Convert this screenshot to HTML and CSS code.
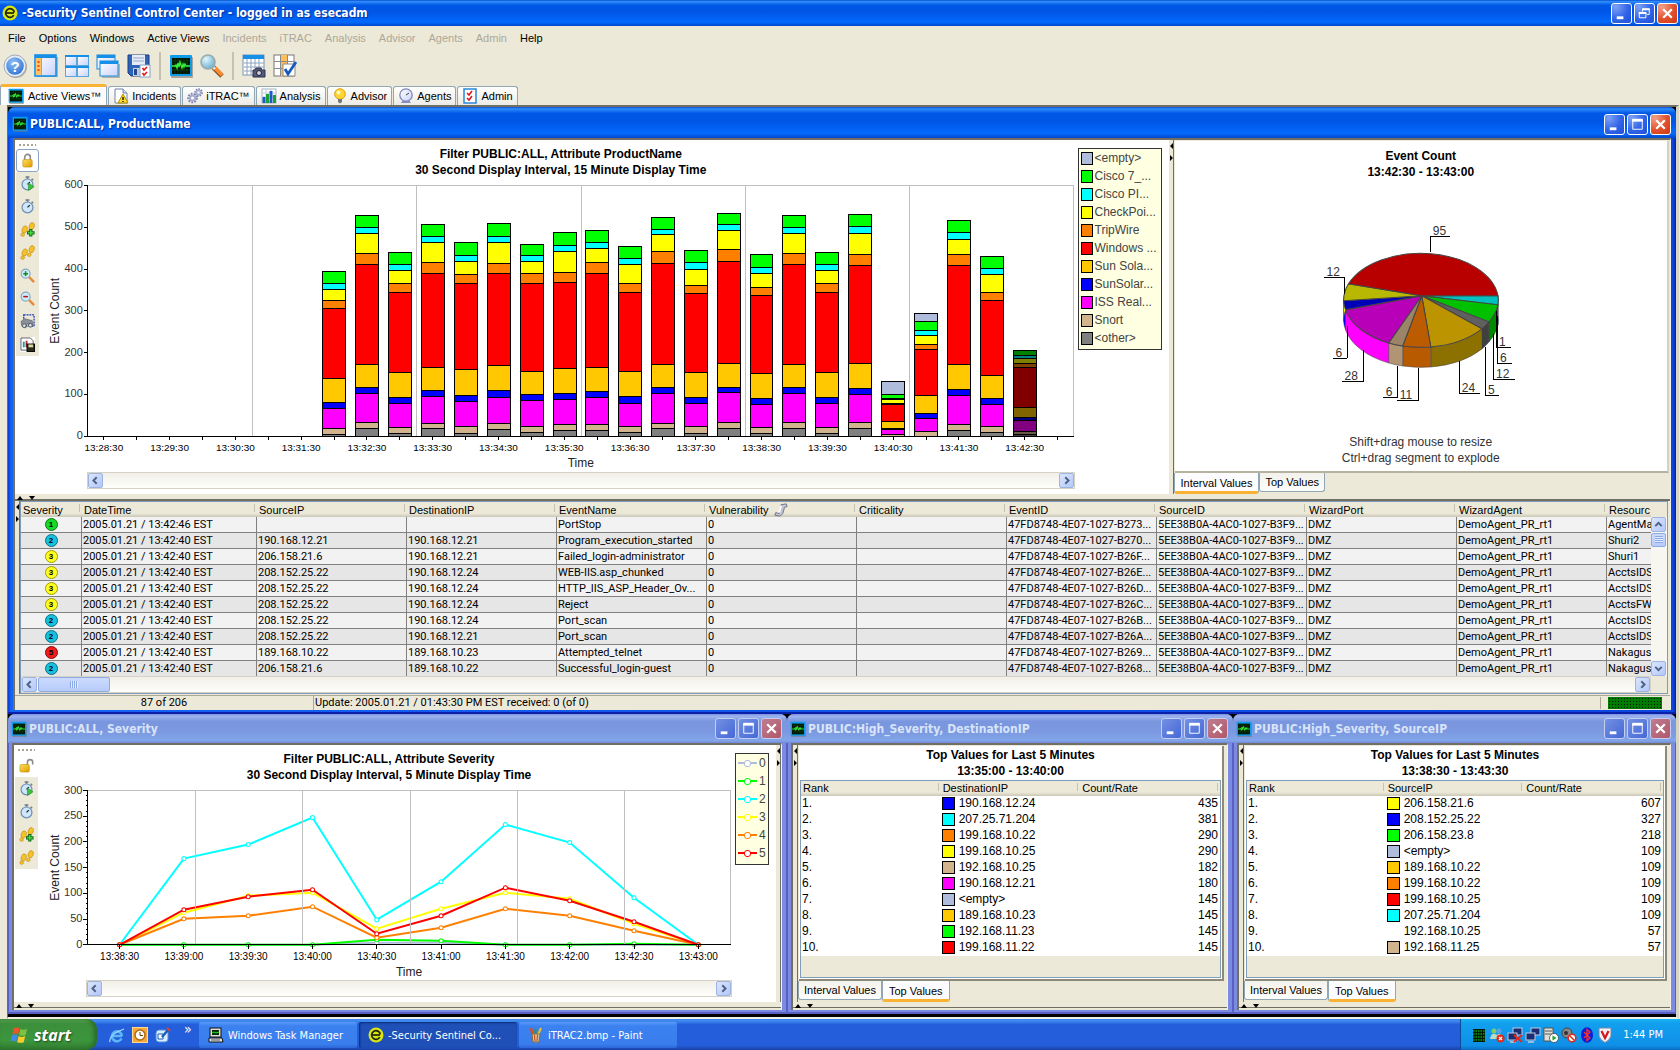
FILE: index.html
```html
<!DOCTYPE html>
<html lang="en">

<head>
    <meta charset="UTF-8">
    <meta name="viewport" content="width=device-width, initial-scale=1.0">
    <title>-Security Sentinel Control Center</title>
    <link rel="stylesheet" href="styles.css">
</head>

<body>
    <!-- icon sprite -->
    <svg class="sprite" xmlns="http://www.w3.org/2000/svg">
        <defs>
            <linearGradient id="g-sky" x1="0" y1="0" x2="1" y2="1"><stop offset="0" stop-color="#fff" /><stop offset="1" stop-color="#c9d3fb" /></linearGradient>
            <radialGradient id="g-help" cx=".4" cy=".3" r=".8"><stop offset="0" stop-color="#8fc0f8" /><stop offset="1" stop-color="#2a6fd0" /></radialGradient>
            <radialGradient id="g-lens" cx=".35" cy=".3" r=".8"><stop offset="0" stop-color="#e4f6fc" /><stop offset="1" stop-color="#5fa9cc" /></radialGradient>
            <linearGradient id="g-gold" x1="0" y1="0" x2="1" y2="1"><stop offset="0" stop-color="#ffe25a" /><stop offset="1" stop-color="#e09a00" /></linearGradient>

            <symbol id="i-logo" viewBox="0 0 16 16"><circle cx="8" cy="8" r="7.5" fill="#d9e414" /><circle cx="8" cy="8" r="4.300" fill="none" stroke="#20240a" stroke-width="1.800" stroke-dasharray="23.500 3.500" transform="rotate(30 8 8)" /><path d="M4 8h8" stroke="#20240a" stroke-width="1.700" /></symbol>
            <symbol id="i-pulse" viewBox="0 0 24 24"><rect x="2" y="3" width="22" height="21" rx="1" fill="#777" opacity=".6" /><rect x="1" y="1" width="22" height="21" rx="1" fill="#0e9bea" /><rect x="3" y="4" width="18" height="16" fill="#021003" /><path d="M6 4v16M9 4v16M12 4v16M15 4v16M18 4v16M3 7h18M3 10h18M3 13h18M3 16h18" stroke="#0c4a10" stroke-width=".7" /><path d="M3 12h3l1-1 1 3 1-5 1 4 1-5 2 6 1-4 1 3 1-3 1 2h4" fill="none" stroke="#39f23c" stroke-width="1.3" /></symbol>
            <symbol id="i-help" viewBox="0 0 24 24"><circle cx="13" cy="13" r="11" fill="#888" opacity=".6" /><circle cx="12" cy="12" r="11" fill="#e9eef4" stroke="#8d98a8" stroke-width=".8" /><circle cx="12" cy="12" r="8.8" fill="url(#g-help)" /><text x="12" y="17.5" text-anchor="middle" font-size="15" font-weight="bold" font-family="Liberation Sans, sans-serif" fill="#fff">?</text></symbol>
            <symbol id="i-layout" viewBox="0 0 24 24"><rect x="2" y="3" width="22" height="20" fill="#8a8a8a" opacity=".6" /><rect x="1" y="1" width="21" height="21" fill="url(#g-sky)" stroke="#1590e6" stroke-width="1.6" /><rect x="1" y="1" width="21" height="3" fill="#1590e6" /><rect x="2" y="4" width="5" height="17" fill="#ffc266" /><path d="M7.500 4v17" stroke="#6ab4ee" /><path d="M4.500 7v2M4.500 11v2M4.500 15v2" stroke="#e2521a" stroke-width="2" /></symbol>
            <symbol id="i-tile" viewBox="0 0 24 24"><g fill="url(#g-sky)" stroke="#5aa6dc"><rect x=".5" y="1.500" width="11" height="10" /><rect x="12.500" y="1.500" width="11" height="10" /><rect x=".5" y="12.500" width="11" height="10" /><rect x="12.500" y="12.500" width="11" height="10" /></g><path d="M0 2h24M0 13h24" stroke="#1590e6" stroke-width="2" /></symbol>
            <symbol id="i-cascade" viewBox="0 0 24 24"><rect x="6" y="10" width="18" height="14" fill="#8a8a8a" opacity=".6" /><g fill="url(#g-sky)" stroke="#3a9ae0" stroke-width="1.200"><rect x="1" y="1" width="18" height="14" /><rect x="4" y="7" width="18" height="15" /></g><path d="M1 2.500h18M4 8.500h18" stroke="#1590e6" stroke-width="3" /></symbol>
            <symbol id="i-save" viewBox="0 0 24 24"><path d="M1 1h21v21H4l-3-3z" fill="#2f63b8" stroke="#163f86" /><rect x="5" y="1" width="13" height="10" fill="#e6ecf6" /><path d="M6 4h11M6 7h11" stroke="#8fa5cc" /><rect x="6" y="14" width="8" height="8" fill="#c5cfe0" /><rect x="7" y="15" width="3" height="6" fill="#234a90" /><rect x="13" y="11" width="10" height="12" fill="#fff" stroke="#8aa0c0" /><path d="M15.500 14l1.500 2 3-3M15.500 19l1.500 2 3-3" stroke="#e01010" fill="none" stroke-width="1.500" /></symbol>
            <symbol id="i-find" viewBox="0 0 24 24"><path d="M13 13l9 9" stroke="#8a5a30" stroke-width="5" /><path d="M15 14l7 7" stroke="#ff8a2a" stroke-width="3.500" /><path d="M12 12l3 3" stroke="#ddd" stroke-width="3" /><circle cx="8" cy="8" r="7" fill="url(#g-lens)" stroke="#9aa" stroke-width="1.600" /></symbol>
            <symbol id="i-gridcam" viewBox="0 0 24 24"><rect x="1" y="1" width="21" height="20" fill="#fff" stroke="#7794b8" /><path d="M5 5v16M9 5v16M13 5v16M17 5v16M2 9h20M2 13h20M2 17h20" stroke="#8fa2bb" /><rect x="1" y="1" width="21" height="4" fill="#1590e6" /><path d="M11 16h2l1-2h5l1 2h3v7H11z" fill="#55597a" stroke="#2d3050" /><circle cx="17" cy="19" r="2.500" fill="#c8cee8" stroke="#222" /></symbol>
            <symbol id="i-gridcheck" viewBox="0 0 24 24"><rect x="1" y="1" width="20" height="21" fill="#fff" stroke="#777" /><rect x="7" y="1" width="7" height="21" fill="#ffbe5c" /><path d="M7.500 1v21M14.500 1v21M1 7.500h20M1 14.500h20" stroke="#8a8a8a" /><path d="M10 10h12v12H10z" fill="#fff" stroke="#8a8a8a" /><path d="M12 15l3 5 8-12" stroke="#1458c0" stroke-width="2.800" fill="none" /></symbol>
            <symbol id="i-docwarn" viewBox="0 0 16 16"><path d="M2 1h8l4 4v10H2z" fill="#fff" stroke="#6e83a8" /><path d="M10 1v4h4" fill="#d5def0" stroke="#6e83a8" /><path d="M10 6l5 9H5z" fill="#ffe02a" stroke="#b08a00" /><path d="M10 9v3M10 13v1" stroke="#000" stroke-width="1.300" /></symbol>
            <symbol id="i-gears" viewBox="0 0 16 16"><g fill="none" stroke="#7d83ae"><circle cx="5.500" cy="10" r="4.300" stroke-dasharray="1.800 1.200" stroke-width="2" /><circle cx="11.500" cy="4.500" r="3.300" stroke-dasharray="1.500 1" stroke-width="2" /></g><circle cx="5.500" cy="10" r="3.600" fill="#a6acd0" /><circle cx="11.500" cy="4.500" r="2.800" fill="#a6acd0" /><circle cx="5.500" cy="10" r="1.500" fill="#fff" /><circle cx="11.500" cy="4.500" r="1.200" fill="#fff" /></symbol>
            <symbol id="i-bars" viewBox="0 0 16 16"><rect x="1" y="1" width="14" height="14" fill="#fff" stroke="#aab4c4" /><path d="M1 5h14M1 9h14M5 1v14M10 1v14" stroke="#c5ccd8" /><path d="M3 15V9" stroke="#1c58c8" stroke-width="3" /><path d="M6.500 15V6" stroke="#18a030" stroke-width="3" /><path d="M10 15V3" stroke="#1c58c8" stroke-width="3" /><path d="M13.500 15V7" stroke="#18a030" stroke-width="3" /></symbol>
            <symbol id="i-bulb" viewBox="0 0 16 16"><circle cx="8" cy="6" r="5.300" fill="#ffd633" stroke="#e0a000" /><circle cx="6.500" cy="4.500" r="2" fill="#fff6c0" /><path d="M6 11h4v3l-2 1.500L6 14z" fill="#777" /></symbol>
            <symbol id="i-dial" viewBox="0 0 16 16"><path d="M3 15h10l-2-3H5z" fill="#8a8ec0" /><circle cx="8" cy="7" r="6.200" fill="url(#g-sky)" stroke="#8088b8" stroke-width="1.300" /><path d="M8 7l3-2" stroke="#444" /></symbol>
            <symbol id="i-check" viewBox="0 0 16 16"><rect x="2" y="1" width="12" height="14" fill="#fff" stroke="#2a86d8" stroke-width="1.500" /><path d="M5 5l2 2 3-4M5 10l2 2 3-4" stroke="#e01818" fill="none" stroke-width="1.600" /></symbol>
            <symbol id="i-lock" viewBox="0 0 16 16"><path d="M5 8V4.500a3 3 0 0 1 6 0V8" fill="none" stroke="#8c8c8c" stroke-width="1.700" /><rect x="3" y="7" width="10" height="8" rx="1.500" fill="url(#g-gold)" stroke="#b88a00" stroke-width=".6" /></symbol>
            <symbol id="i-unlock" viewBox="0 0 16 16"><path d="M9 8V4.500a2.800 2.800 0 0 1 5.600 0V7" fill="none" stroke="#8c8c8c" stroke-width="1.700" /><rect x="1" y="7" width="10" height="8" rx="1.500" fill="url(#g-gold)" stroke="#b88a00" stroke-width=".6" /></symbol>
            <symbol id="i-watch" viewBox="0 0 16 16"><path d="M6 1h4M8 1v3M12.500 3l1.500 1.500" stroke="#707a88" stroke-width="1.600" /><circle cx="8" cy="9" r="5.800" fill="#cfe6fb" stroke="#6f8fb2" stroke-width="1.300" /><path d="M8 9l2.500-2.500" stroke="#123" stroke-width="1.300" /></symbol>
            <symbol id="i-watchplay" viewBox="0 0 16 16"><use href="#i-watch" /><path d="M9 7.500l6 4-6 4z" fill="#3cc23c" stroke="#1c8a24" stroke-width=".6" /></symbol>
            <symbol id="i-feet" viewBox="0 0 16 16"><g fill="#f7c229" stroke="#b07c00" stroke-width=".5"><ellipse cx="5" cy="8" rx="2.700" ry="4" transform="rotate(20 5 8)" /><ellipse cx="2.800" cy="13.500" rx="2" ry="1.800" /><ellipse cx="12.500" cy="4.500" rx="2.700" ry="4" transform="rotate(20 12.500 4.500)" /><ellipse cx="9.900" cy="10.500" rx="2" ry="1.800" /></g></symbol>
            <symbol id="i-feetplus" viewBox="0 0 16 16"><use href="#i-feet" /><path d="M11.500 7.500v8M7.500 11.500h8" stroke="#0a6a14" stroke-width="3.400" /><path d="M11.500 8.500v6M8.500 11.500h6" stroke="#4fe04a" stroke-width="1.400" /></symbol>
            <symbol id="i-zoomin" viewBox="0 0 16 16"><path d="M9 9l6 6" stroke="#e88a3a" stroke-width="2.600" /><circle cx="6" cy="6" r="4.800" fill="#cdeaf8" stroke="#8ab" stroke-width="1.200" /><path d="M6 3.500v5M3.500 6h5" stroke="#108a18" stroke-width="1.600" /></symbol>
            <symbol id="i-zoomout" viewBox="0 0 16 16"><path d="M9 9l6 6" stroke="#e88a3a" stroke-width="2.600" /><circle cx="6" cy="6" r="4.800" fill="#cdeaf8" stroke="#8ab" stroke-width="1.200" /><path d="M3.500 6h5" stroke="#c01010" stroke-width="1.600" /></symbol>
            <symbol id="i-binoc" viewBox="0 0 16 16"><rect x="4" y="1" width="11" height="12" fill="none" stroke="#1434b8" stroke-width="1.300" stroke-dasharray="2 1" /><path d="M1 8l4-3 8 2 1 5-3 2-3-4-2 5-4-2z" fill="#8a8f98" stroke="#555" stroke-width=".6" /><circle cx="4.500" cy="12.500" r="2" fill="#cfe0ee" stroke="#555" /><circle cx="11" cy="12" r="2" fill="#cfe0ee" stroke="#555" /></symbol>
            <symbol id="i-chartsave" viewBox="0 0 16 16"><rect width="16" height="16" fill="#fff" /><path d="M1 1h10l3 3v10H1z" fill="#fff" stroke="#555" /><path d="M4 11V5" stroke="#18a0a0" stroke-width="2" /><path d="M7 11V4" stroke="#d02020" stroke-width="2" /><rect x="7.500" y="7.500" width="8" height="8" fill="#2c2c1c" stroke="#000" /><rect x="9" y="8" width="5" height="3" fill="#d8d8a0" /></symbol>
            <symbol id="i-scroll" viewBox="0 0 16 16"><path d="M8 2l6-1 1 3-3 1-2 7-3 3-6-1 1-3 4 1z" fill="#c4c6d6" stroke="#666a80" /><path d="M8 3l-2 8" stroke="#fff" stroke-width="2" /></symbol>
            <symbol id="i-min" viewBox="0 0 20 20"><path d="M5 14.500h7" stroke="#fff" stroke-width="3" /></symbol>
            <symbol id="i-max" viewBox="0 0 20 20"><path d="M5 5h10v10H5z" fill="none" stroke="#fff" /><path d="M4.500 5.500h11" stroke="#fff" stroke-width="3" /></symbol>
            <symbol id="i-restore" viewBox="0 0 20 20"><path d="M8 8V5.500h7V11h-2.500M4.500 9.500h7v5h-7z" fill="none" stroke="#fff" /><path d="M7.500 5.500h8M4 9.500h8" stroke="#fff" stroke-width="2" /></symbol>
            <symbol id="i-close" viewBox="0 0 20 20"><path d="M5.500 5.500l9 9M14.500 5.500l-9 9" stroke="#fff" stroke-width="2.300" /></symbol>
            <symbol id="i-left" viewBox="0 0 16 16"><path d="M9.500 4L5.500 8l4 4" fill="none" stroke="#4d6185" stroke-width="2.400" /></symbol>
            <symbol id="i-right" viewBox="0 0 16 16"><path d="M6.500 4l4 4-4 4" fill="none" stroke="#4d6185" stroke-width="2.400" /></symbol>
            <symbol id="i-up" viewBox="0 0 16 16"><path d="M4 10l4-4 4 4" fill="none" stroke="#4d6185" stroke-width="2.400" /></symbol>
            <symbol id="i-down" viewBox="0 0 16 16"><path d="M4 6l4 4 4-4" fill="none" stroke="#4d6185" stroke-width="2.400" /></symbol>
            <symbol id="i-arrows-v" viewBox="0 0 4 18"><path d="M4 0v6L1 3zM1 12v6l3-3z" fill="#000" /></symbol>
            <symbol id="i-arrows-h" viewBox="0 0 18 4"><path d="M0 4h6L3 0zM12 0h6l-3 4z" fill="#000" /></symbol>
            <symbol id="i-flag" viewBox="0 0 20 18"><path d="M4 2q3-2 6 0l-1.500 6.500q-3-2-6 0z" fill="#f0532a" /><path d="M11 2.500q3 2 7 0l-1.500 6.500q-3 1.500-7 0z" fill="#7cc142" /><path d="M2 9.500q3-2 6 0L6.500 16q-3-2-6 0z" fill="#3f8bea" /><path d="M9 10q3 2 7 0l-1.500 6.500q-3 1.500-7 0z" fill="#fbcb2e" /></symbol>
            <symbol id="i-ie" viewBox="0 0 16 16"><path d="M13 9H4M12.500 11.500A5 5 0 1 1 13 9" fill="none" stroke="#5cb6f5" stroke-width="2.600" /><path d="M1 15Q-1 8 15 2" fill="none" stroke="#a5dcff" stroke-width="1.300" /></symbol>
            <symbol id="i-outlook" viewBox="0 0 16 16"><rect x=".5" y=".5" width="15" height="15" fill="#f2a83a" stroke="#ffd890" /><circle cx="8" cy="8" r="5" fill="#fff" stroke="#b06a10" stroke-width="1.500" /><path d="M8 5v3.500h3" fill="none" stroke="#704000" /></symbol>
            <symbol id="i-desk" viewBox="0 0 16 16"><rect x="1" y="3" width="12" height="12" rx="3" fill="#d8ecff" stroke="#4a90d8" /><path d="M3 7h5v5H3z" fill="#fff" stroke="#1c5cb8" /><path d="M7 10l6-7" stroke="#1c5cb8" stroke-width="2.500" /><path d="M12 1l3 3" stroke="#e84020" stroke-width="2" /></symbol>
            <symbol id="i-pc" viewBox="0 0 16 16"><rect x="2" y="1" width="11" height="9" fill="#ddd" stroke="#111" /><rect x="4" y="3" width="7" height="5" fill="#052a08" /><path d="M4 6l2-1 2 1 3-1" stroke="#2be22b" fill="none" /><path d="M1 11h13l1 4H1z" fill="#e8e8e8" stroke="#111" /><path d="M3 13h9" stroke="#555" /></symbol>
            <symbol id="i-paint" viewBox="0 0 16 16"><path d="M4.500 8L3 1" stroke="#e04a20" stroke-width="2.400" /><path d="M7.500 8V2" stroke="#2ca02c" stroke-width="1.800" /><path d="M10 8l3-7" stroke="#f0c020" stroke-width="2" /><path d="M4 7h8l-1 8H5z" fill="#d8c49a" stroke="#8a6a30" /><path d="M6.500 8l.5 6M9.500 8L9 14" stroke="#c83a18" /></symbol>
            <symbol id="i-people" viewBox="0 0 16 16"><circle cx="5" cy="4" r="2.500" fill="#7ccf6a" /><circle cx="10" cy="4" r="2.500" fill="#5aa0e8" /><path d="M1 12q1-6 5-5t3 5zM7 12q1-6 4-5t3 5z" fill="#b8dcc8" /><circle cx="11.500" cy="11.500" r="4" fill="#e02a1a" /><path d="M10 10l3 3M13 10l-3 3" stroke="#fff" stroke-width="1.200" /></symbol>
            <symbol id="i-net" viewBox="0 0 16 16"><rect x="6" y="1" width="9" height="7" fill="#1c2c70" stroke="#c0c8e0" /><rect x="1" y="6" width="9" height="7" fill="#1c2c70" stroke="#c0c8e0" /><path d="M3 15h6" stroke="#c0c8e0" stroke-width="1.500" /></symbol>
            <symbol id="i-netoff" viewBox="0 0 16 16"><use href="#i-net" /><path d="M7 8l8 7M15 8l-8 7" stroke="#e8281c" stroke-width="2" /></symbol>
            <symbol id="i-server" viewBox="0 0 16 16"><rect x="1" y="1" width="9" height="13" fill="#e0e0d8" stroke="#555" /><path d="M2 4h7M2 7h7" stroke="#555" /><circle cx="11" cy="11" r="4.500" fill="#fff" stroke="#333" stroke-width=".7" /><path d="M9.500 8.500l4 2.500-4 2.500z" fill="#18a028" /></symbol>
            <symbol id="i-sound" viewBox="0 0 16 16"><circle cx="6" cy="6" r="5" fill="#888" stroke="#444" /><circle cx="5" cy="6" r="2" fill="#333" /><circle cx="11" cy="11" r="3.800" fill="#fff" stroke="#e02a1a" stroke-width="1.500" /><path d="M8.500 8.500l5 5" stroke="#e02a1a" stroke-width="1.500" /></symbol>
            <symbol id="i-bt" viewBox="0 0 16 16"><ellipse cx="8" cy="8" rx="6" ry="7.800" fill="#0a1ce0" /><path d="M5 5l6 6-3 2.500v-11L11 5l-6 6" fill="none" stroke="#ff3020" stroke-width="1.300" /></symbol>
            <symbol id="i-shield" viewBox="0 0 16 16"><path d="M2 1h12v8q-1 4-6 6.500Q3 13 2 9z" fill="#f2f2f4" stroke="#7a86a8" /><path d="M4.500 4L8 11l3.500-7" fill="none" stroke="#d01818" stroke-width="2.200" /></symbol>
            <symbol id="i-load" viewBox="0 0 16 16"><rect x="2" y="2" width="12" height="13" fill="#021a04" /><path d="M2 4h12M2 7h12M2 10h12M2 13h12" stroke="#0c9a14" stroke-width="1.500" stroke-dasharray="1.500 1" /></symbol>
        </defs>
    </svg>

    <header class="app-title">
        <svg class="icon16"><use href="#i-logo" /></svg>
        <h1>-Security Sentinel Control Center - logged in as esecadm</h1>
        <div class="win-buttons">
            <button class="win-btn" aria-label="Minimize"><svg><use href="#i-min" /></svg></button>
            <button class="win-btn" aria-label="Restore"><svg><use href="#i-restore" /></svg></button>
            <button class="win-btn close" aria-label="Close"><svg><use href="#i-close" /></svg></button>
        </div>
    </header>

    <nav class="menu">
        <button>File</button>
        <button>Options</button>
        <button>Windows</button>
        <button>Active Views</button>
        <button disabled>Incidents</button>
        <button disabled>iTRAC</button>
        <button disabled>Analysis</button>
        <button disabled>Advisor</button>
        <button disabled>Agents</button>
        <button disabled>Admin</button>
        <button>Help</button>
    </nav>

    <div class="toolbar">
        <button aria-label="Help"><svg><use href="#i-help" /></svg></button>
        <button aria-label="Navigator"><svg><use href="#i-layout" /></svg></button>
        <button aria-label="Tile"><svg><use href="#i-tile" /></svg></button>
        <button aria-label="Cascade"><svg><use href="#i-cascade" /></svg></button>
        <button aria-label="Save preferences"><svg><use href="#i-save" /></svg></button>
        <span class="sep"></span>
        <button aria-label="New active view"><svg><use href="#i-pulse" /></svg></button>
        <button aria-label="Find"><svg><use href="#i-find" /></svg></button>
        <span class="sep"></span>
        <button aria-label="Snapshot"><svg><use href="#i-gridcam" /></svg></button>
        <button aria-label="Manage columns"><svg><use href="#i-gridcheck" /></svg></button>
    </div>

    <div class="tabs" role="tablist">
        <button class="tab active" role="tab"><svg class="icon16"><use href="#i-pulse" /></svg>Active Views™</button>
        <button class="tab" role="tab"><svg class="icon16"><use href="#i-docwarn" /></svg>Incidents</button>
        <button class="tab" role="tab"><svg class="icon16"><use href="#i-gears" /></svg>iTRAC™</button>
        <button class="tab" role="tab"><svg class="icon16"><use href="#i-bars" /></svg>Analysis</button>
        <button class="tab" role="tab"><svg class="icon16"><use href="#i-bulb" /></svg>Advisor</button>
        <button class="tab" role="tab"><svg class="icon16"><use href="#i-dial" /></svg>Agents</button>
        <button class="tab" role="tab"><svg class="icon16"><use href="#i-check" /></svg>Admin</button>
    </div>

    <main class="desktop">
        <!-- product name window -->
        <section class="window">
            <div class="window-title">
                <svg class="icon16"><use href="#i-pulse" /></svg>
                <h2>PUBLIC:ALL, ProductName</h2>
                <div class="win-buttons">
                    <button class="win-btn" aria-label="Minimize"><svg><use href="#i-min" /></svg></button>
                    <button class="win-btn" aria-label="Maximize"><svg><use href="#i-max" /></svg></button>
                    <button class="win-btn close" aria-label="Close"><svg><use href="#i-close" /></svg></button>
                </div>
            </div>
            <div class="window-body">
                <div class="chart-row">
                    <div class="chart-area">
                        <div class="side-tools">
                            <span class="grip"></span>
                            <button class="pressed" aria-label="Lock"><svg><use href="#i-lock" /></svg></button>
                            <button aria-label="Start refresh"><svg><use href="#i-watchplay" /></svg></button>
                            <button aria-label="Refresh rate"><svg><use href="#i-watch" /></svg></button>
                            <button aria-label="Increase display time"><svg><use href="#i-feetplus" /></svg></button>
                            <button aria-label="Decrease display time"><svg><use href="#i-feet" /></svg></button>
                            <button aria-label="Zoom in"><svg><use href="#i-zoomin" /></svg></button>
                            <button aria-label="Zoom out"><svg><use href="#i-zoomout" /></svg></button>
                            <button aria-label="Zoom to selection"><svg><use href="#i-binoc" /></svg></button>
                            <button aria-label="Save chart"><svg><use href="#i-chartsave" /></svg></button>
                        </div>
                        <div class="chart">
                            <h3>Filter PUBLIC:ALL, Attribute ProductName<br>30 Second Display Interval, 15 Minute Display Time</h3>
                            <svg id="product-chart" class="plot" viewBox="0 0 1036 292"></svg>
                            <div class="hscroll">
                                <button aria-label="Scroll left"><svg><use href="#i-left" /></svg></button>
                                <button aria-label="Scroll right"><svg><use href="#i-right" /></svg></button>
                            </div>
                        </div>
                        <ul class="legend wide">
                            <li><span class="swatch empty"></span>&lt;empty&gt;</li>
                            <li><span class="swatch green"></span>Cisco 7_...</li>
                            <li><span class="swatch cyan"></span>Cisco PI...</li>
                            <li><span class="swatch yellow"></span>CheckPoi...</li>
                            <li><span class="swatch orange"></span>TripWire</li>
                            <li><span class="swatch red"></span>Windows ...</li>
                            <li><span class="swatch gold"></span>Sun Sola...</li>
                            <li><span class="swatch blue"></span>SunSolar...</li>
                            <li><span class="swatch magenta"></span>ISS Real...</li>
                            <li><span class="swatch tan"></span>Snort</li>
                            <li><span class="swatch gray"></span>&lt;other&gt;</li>
                        </ul>
                    </div>
                    <div class="vsplit"><svg><use href="#i-arrows-v" /></svg></div>
                    <div class="pie-side">
                        <div class="pie-panel">
                            <h3>Event Count<br>13:42:30 - 13:43:00</h3>
                            <svg id="pie-chart" class="plot" viewBox="0 3 491 250"></svg>
                            <p class="hint">Shift+drag mouse to resize<br>Ctrl+drag segment to explode</p>
                        </div>
                        <div class="bottom-tabs" role="tablist">
                            <button class="btab active" role="tab">Interval Values</button>
                            <button class="btab" role="tab">Top Values</button>
                        </div>
                    </div>
                </div>
                <div class="hsplit"><svg><use href="#i-arrows-h" /></svg></div>
                <div class="event-row">
                    <div class="vsplit"><svg><use href="#i-arrows-v" /></svg></div>
                    <div class="event-panel">
                        <div class="event-scroll">
                            <table class="events">
                                <colgroup><col class="c-sev"><col class="c-date"><col span="9"><col class="c-last"></colgroup>
                                <thead>
                                    <tr><th>Severity</th><th>DateTime</th><th>SourceIP</th><th>DestinationIP</th><th>EventName</th><th>Vulnerability <svg class="sort"><use href="#i-scroll" /></svg></th><th>Criticality</th><th>EventID</th><th>SourceID</th><th>WizardPort</th><th>WizardAgent</th><th>Resourc</th></tr>
                                </thead>
                                <tbody>
                                    <tr><td><span class="sev s1">1</span></td><td>2005.01.21 / 13:42:46 EST</td><td></td><td></td><td>PortStop</td><td>0</td><td></td><td>47FD8748-4E07-1027-B273...</td><td>5EE38B0A-4AC0-1027-B3F9...</td><td>DMZ</td><td>DemoAgent_PR_rt1</td><td>AgentMa</td></tr>
                                    <tr><td><span class="sev s2">2</span></td><td>2005.01.21 / 13:42:40 EST</td><td>190.168.12.21</td><td>190.168.12.21</td><td>Program_execution_started</td><td>0</td><td></td><td>47FD8748-4E07-1027-B270...</td><td>5EE38B0A-4AC0-1027-B3F9...</td><td>DMZ</td><td>DemoAgent_PR_rt1</td><td>Shuri2</td></tr>
                                    <tr><td><span class="sev s3">3</span></td><td>2005.01.21 / 13:42:40 EST</td><td>206.158.21.6</td><td>190.168.12.21</td><td>Failed_login-administrator</td><td>0</td><td></td><td>47FD8748-4E07-1027-B26F...</td><td>5EE38B0A-4AC0-1027-B3F9...</td><td>DMZ</td><td>DemoAgent_PR_rt1</td><td>Shuri1</td></tr>
                                    <tr><td><span class="sev s3">3</span></td><td>2005.01.21 / 13:42:40 EST</td><td>208.152.25.22</td><td>190.168.12.24</td><td>WEB-IIS.asp_chunked</td><td>0</td><td></td><td>47FD8748-4E07-1027-B26E...</td><td>5EE38B0A-4AC0-1027-B3F9...</td><td>DMZ</td><td>DemoAgent_PR_rt1</td><td>AcctsIDS</td></tr>
                                    <tr><td><span class="sev s3">3</span></td><td>2005.01.21 / 13:42:40 EST</td><td>208.152.25.22</td><td>190.168.12.24</td><td>HTTP_IIS_ASP_Header_Ov...</td><td>0</td><td></td><td>47FD8748-4E07-1027-B26D...</td><td>5EE38B0A-4AC0-1027-B3F9...</td><td>DMZ</td><td>DemoAgent_PR_rt1</td><td>AcctsIDS</td></tr>
                                    <tr><td><span class="sev s3">3</span></td><td>2005.01.21 / 13:42:40 EST</td><td>208.152.25.22</td><td>190.168.12.24</td><td>Reject</td><td>0</td><td></td><td>47FD8748-4E07-1027-B26C...</td><td>5EE38B0A-4AC0-1027-B3F9...</td><td>DMZ</td><td>DemoAgent_PR_rt1</td><td>AcctsFW</td></tr>
                                    <tr><td><span class="sev s2">2</span></td><td>2005.01.21 / 13:42:40 EST</td><td>208.152.25.22</td><td>190.168.12.24</td><td>Port_scan</td><td>0</td><td></td><td>47FD8748-4E07-1027-B26B...</td><td>5EE38B0A-4AC0-1027-B3F9...</td><td>DMZ</td><td>DemoAgent_PR_rt1</td><td>AcctsIDS</td></tr>
                                    <tr><td><span class="sev s2">2</span></td><td>2005.01.21 / 13:42:40 EST</td><td>208.152.25.22</td><td>190.168.12.21</td><td>Port_scan</td><td>0</td><td></td><td>47FD8748-4E07-1027-B26A...</td><td>5EE38B0A-4AC0-1027-B3F9...</td><td>DMZ</td><td>DemoAgent_PR_rt1</td><td>AcctsIDS</td></tr>
                                    <tr><td><span class="sev s5">5</span></td><td>2005.01.21 / 13:42:40 EST</td><td>189.168.10.22</td><td>189.168.10.23</td><td>Attempted_telnet</td><td>0</td><td></td><td>47FD8748-4E07-1027-B269...</td><td>5EE38B0A-4AC0-1027-B3F9...</td><td>DMZ</td><td>DemoAgent_PR_rt1</td><td>Nakagus</td></tr>
                                    <tr><td><span class="sev s2">2</span></td><td>2005.01.21 / 13:42:40 EST</td><td>206.158.21.6</td><td>189.168.10.22</td><td>Successful_login-guest</td><td>0</td><td></td><td>47FD8748-4E07-1027-B268...</td><td>5EE38B0A-4AC0-1027-B3F9...</td><td>DMZ</td><td>DemoAgent_PR_rt1</td><td>Nakagus</td></tr>
                                </tbody>
                            </table>
                        </div>
                        <div class="vscroll">
                            <button aria-label="Scroll up"><svg><use href="#i-up" /></svg></button>
                            <span class="thumb"></span>
                            <button aria-label="Scroll down"><svg><use href="#i-down" /></svg></button>
                        </div>
                        <div class="hscroll">
                            <button aria-label="Scroll left"><svg><use href="#i-left" /></svg></button>
                            <span class="thumb"></span>
                            <button aria-label="Scroll right"><svg><use href="#i-right" /></svg></button>
                        </div>
                    </div>
                </div>
                <div class="status">
                    <span class="count">87 of 206</span>
                    <span class="update">Update: 2005.01.21 / 01:43:30 PM EST received: 0 (of 0)</span>
                    <span class="meter"></span>
                </div>
            </div>
        </section>

        <div class="lower">
            <!-- severity window -->
            <section class="window inactive">
                <div class="window-title">
                    <svg class="icon16"><use href="#i-pulse" /></svg>
                    <h2>PUBLIC:ALL, Severity</h2>
                    <div class="win-buttons">
                        <button class="win-btn" aria-label="Minimize"><svg><use href="#i-min" /></svg></button>
                        <button class="win-btn" aria-label="Maximize"><svg><use href="#i-max" /></svg></button>
                        <button class="win-btn close" aria-label="Close"><svg><use href="#i-close" /></svg></button>
                    </div>
                </div>
                <div class="window-body">
                    <div class="chart-row">
                        <div class="chart-area">
                            <div class="side-tools">
                                <span class="grip"></span>
                                <button class="plain" aria-label="Unlock"><svg><use href="#i-unlock" /></svg></button>
                                <button aria-label="Start refresh"><svg><use href="#i-watchplay" /></svg></button>
                                <button aria-label="Refresh rate"><svg><use href="#i-watch" /></svg></button>
                                <button aria-label="Increase display time"><svg><use href="#i-feetplus" /></svg></button>
                                <button aria-label="Decrease display time"><svg><use href="#i-feet" /></svg></button>
                            </div>
                            <div class="chart">
                                <h3>Filter PUBLIC:ALL, Attribute Severity<br>30 Second Display Interval, 5 Minute Display Time</h3>
                                <svg id="severity-chart" class="plot" viewBox="0 0 691 195"></svg>
                                <div class="hscroll">
                                    <button aria-label="Scroll left"><svg><use href="#i-left" /></svg></button>
                                    <button aria-label="Scroll right"><svg><use href="#i-right" /></svg></button>
                                </div>
                            </div>
                            <ul class="legend lines">
                                <li><span class="line-key empty"></span>0</li>
                                <li><span class="line-key green"></span>1</li>
                                <li><span class="line-key cyan"></span>2</li>
                                <li><span class="line-key yellow"></span>3</li>
                                <li><span class="line-key orange"></span>4</li>
                                <li><span class="line-key red"></span>5</li>
                            </ul>
                        </div>
                        <div class="vsplit"><svg><use href="#i-arrows-v" /></svg></div>
                    </div>
                    <div class="hsplit"><svg><use href="#i-arrows-h" /></svg></div>
                </div>
            </section>

            <!-- destination window -->
            <section class="window inactive">
                <div class="window-title">
                    <svg class="icon16"><use href="#i-pulse" /></svg>
                    <h2>PUBLIC:High_Severity, DestinationIP</h2>
                    <div class="win-buttons">
                        <button class="win-btn" aria-label="Minimize"><svg><use href="#i-min" /></svg></button>
                        <button class="win-btn" aria-label="Maximize"><svg><use href="#i-max" /></svg></button>
                        <button class="win-btn close" aria-label="Close"><svg><use href="#i-close" /></svg></button>
                    </div>
                </div>
                <div class="window-body">
                    <div class="chart-row">
                        <div class="vsplit"><svg><use href="#i-arrows-v" /></svg></div>
                        <div class="top-side">
                            <div class="top-panel">
                                <h3>Top Values for Last 5 Minutes<br>13:35:00 - 13:40:00</h3>
                                <div class="top-box">
                                    <table class="top-values">
                                        <thead><tr><th>Rank</th><th>DestinationIP</th><th>Count/Rate</th></tr></thead>
                                        <tbody>
                                            <tr><td>1.</td><td><span class="swatch blue"></span>190.168.12.24</td><td>435</td></tr>
                                            <tr><td>2.</td><td><span class="swatch cyan"></span>207.25.71.204</td><td>381</td></tr>
                                            <tr><td>3.</td><td><span class="swatch orange"></span>199.168.10.22</td><td>290</td></tr>
                                            <tr><td>4.</td><td><span class="swatch yellow"></span>199.168.10.25</td><td>290</td></tr>
                                            <tr><td>5.</td><td><span class="swatch tan"></span>192.168.10.25</td><td>182</td></tr>
                                            <tr><td>6.</td><td><span class="swatch magenta"></span>190.168.12.21</td><td>180</td></tr>
                                            <tr><td>7.</td><td><span class="swatch empty"></span>&lt;empty&gt;</td><td>145</td></tr>
                                            <tr><td>8.</td><td><span class="swatch gold"></span>189.168.10.23</td><td>145</td></tr>
                                            <tr><td>9.</td><td><span class="swatch green"></span>192.168.11.23</td><td>145</td></tr>
                                            <tr><td>10.</td><td><span class="swatch red"></span>199.168.11.22</td><td>145</td></tr>
                                        </tbody>
                                    </table>
                                </div>
                            </div>
                            <div class="bottom-tabs" role="tablist">
                                <button class="btab" role="tab">Interval Values</button>
                                <button class="btab active" role="tab">Top Values</button>
                            </div>
                        </div>
                    </div>
                    <div class="hsplit"><svg><use href="#i-arrows-h" /></svg></div>
                </div>
            </section>

            <!-- source window -->
            <section class="window inactive">
                <div class="window-title">
                    <svg class="icon16"><use href="#i-pulse" /></svg>
                    <h2>PUBLIC:High_Severity, SourceIP</h2>
                    <div class="win-buttons">
                        <button class="win-btn" aria-label="Minimize"><svg><use href="#i-min" /></svg></button>
                        <button class="win-btn" aria-label="Maximize"><svg><use href="#i-max" /></svg></button>
                        <button class="win-btn close" aria-label="Close"><svg><use href="#i-close" /></svg></button>
                    </div>
                </div>
                <div class="window-body">
                    <div class="chart-row">
                        <div class="vsplit"><svg><use href="#i-arrows-v" /></svg></div>
                        <div class="top-side">
                            <div class="top-panel">
                                <h3>Top Values for Last 5 Minutes<br>13:38:30 - 13:43:30</h3>
                                <div class="top-box">
                                    <table class="top-values">
                                        <thead><tr><th>Rank</th><th>SourceIP</th><th>Count/Rate</th></tr></thead>
                                        <tbody>
                                            <tr><td>1.</td><td><span class="swatch yellow"></span>206.158.21.6</td><td>607</td></tr>
                                            <tr><td>2.</td><td><span class="swatch blue"></span>208.152.25.22</td><td>327</td></tr>
                                            <tr><td>3.</td><td><span class="swatch green"></span>206.158.23.8</td><td>218</td></tr>
                                            <tr><td>4.</td><td><span class="swatch empty"></span>&lt;empty&gt;</td><td>109</td></tr>
                                            <tr><td>5.</td><td><span class="swatch gold"></span>189.168.10.22</td><td>109</td></tr>
                                            <tr><td>6.</td><td><span class="swatch orange"></span>199.168.10.22</td><td>109</td></tr>
                                            <tr><td>7.</td><td><span class="swatch red"></span>199.168.10.25</td><td>109</td></tr>
                                            <tr><td>8.</td><td><span class="swatch cyan"></span>207.25.71.204</td><td>109</td></tr>
                                            <tr><td>9.</td><td><span class="swatch none"></span>192.168.10.25</td><td>57</td></tr>
                                            <tr><td>10.</td><td><span class="swatch tan"></span>192.168.11.25</td><td>57</td></tr>
                                        </tbody>
                                    </table>
                                </div>
                            </div>
                            <div class="bottom-tabs" role="tablist">
                                <button class="btab" role="tab">Interval Values</button>
                                <button class="btab active" role="tab">Top Values</button>
                            </div>
                        </div>
                    </div>
                    <div class="hsplit"><svg><use href="#i-arrows-h" /></svg></div>
                </div>
            </section>
        </div>
    </main>

    <footer class="taskbar">
        <button class="start"><svg><use href="#i-flag" /></svg>start</button>
        <div class="quick">
            <button aria-label="Internet Explorer"><svg class="icon16"><use href="#i-ie" /></svg></button>
            <button aria-label="Outlook"><svg class="icon16"><use href="#i-outlook" /></svg></button>
            <button aria-label="Show desktop"><svg class="icon16"><use href="#i-desk" /></svg></button>
            <button class="more">»</button>
        </div>
        <button class="task"><svg class="icon16"><use href="#i-pc" /></svg>Windows Task Manager</button>
        <button class="task current"><svg class="icon16"><use href="#i-logo" /></svg>-Security Sentinel Co...</button>
        <button class="task"><svg class="icon16"><use href="#i-paint" /></svg>iTRAC2.bmp - Paint</button>
        <div class="tray">
            <svg class="icon16"><use href="#i-load" /></svg>
            <svg class="icon16"><use href="#i-people" /></svg>
            <svg class="icon16"><use href="#i-netoff" /></svg>
            <svg class="icon16"><use href="#i-net" /></svg>
            <svg class="icon16"><use href="#i-server" /></svg>
            <svg class="icon16"><use href="#i-sound" /></svg>
            <svg class="icon16"><use href="#i-bt" /></svg>
            <svg class="icon16"><use href="#i-shield" /></svg>
            <span class="clock">1:44 PM</span>
        </div>
    </footer>

    <script src="charts.js"></script>
</body>

</html>
```
FILE: styles.css
```css
* {
    box-sizing: border-box;
}

body {
    margin: 0;
    height: 100vh;
    display: flex;
    flex-direction: column;
    overflow: hidden;
    background: #ece9d8;
    font-family: "Liberation Sans", Arial, sans-serif;
    font-size: 11px;
    color: #000;
}

h1, h2, h3, p, ul {
    margin: 0;
    padding: 0;
}

button {
    font: inherit;
    color: inherit;
    background: none;
    border: 0;
    padding: 0;
}

svg {
    display: block;
}

.sprite {
    position: absolute;
    width: 0;
    height: 0;
}

.icon16 {
    width: 16px;
    height: 16px;
    flex: none;
}

/* title bars */
.app-title,
.window-title {
    display: flex;
    align-items: center;
    color: #fff;
    background: linear-gradient(#0a4fd0, #2f8dfb 6%, #0058e6 20%, #0055e5 45%, #026afe 85%, #0347c8);
}

.app-title {
    height: 26px;
    padding: 0 2px 0 2px;
    gap: 4px;
}

.app-title h1,
.window-title h2 {
    flex: 1;
    font: bold 12px "DejaVu Sans Condensed", "DejaVu Sans", sans-serif;
    white-space: nowrap;
    text-shadow: 1px 1px 1px #06309a;
}

.win-buttons {
    display: flex;
    gap: 2px;
}

.win-btn {
    width: 21px;
    height: 21px;
    border: 1px solid #fff;
    border-radius: 3px;
    background: radial-gradient(circle at 20% 15%, #7ea2f4, #3164e8 55%, #1f4fd6);
}

.win-btn svg {
    width: 19px;
    height: 19px;
}

.win-btn.close {
    background: radial-gradient(circle at 20% 15%, #f0a08a, #e2512c 55%, #cc3a14);
}

/* menu + toolbar */
.menu {
    display: flex;
    align-items: center;
    gap: 13px;
    height: 24px;
    padding-left: 8px;
}

.menu button:disabled {
    color: #aca899;
}

.toolbar {
    display: flex;
    align-items: center;
    gap: 7px;
    height: 34px;
    padding: 0 0 2px 3px;
}

.toolbar svg {
    width: 24px;
    height: 24px;
}

.toolbar .sep {
    width: 2px;
    height: 28px;
    margin: 0 1px;
    background: #c5c2b2;
}

.tabs {
    display: flex;
    align-items: flex-end;
    height: 21px;
    gap: 1px;
}

.tab {
    display: flex;
    align-items: center;
    gap: 3px;
    height: 19px;
    padding: 0 4px;
    border: 1px solid #91a7b4;
    border-bottom: 0;
    border-radius: 3px 3px 0 0;
    background: linear-gradient(#fff, #ecebe6);
}

.tab.active {
    height: 21px;
    padding: 0 5px 0 7px;
    gap: 4px;
    border-top: 3px solid #f9b233;
    background: #fcfcfe;
}

/* mdi desktop */
.desktop {
    flex: 1;
    min-height: 0;
    margin: 0 1px 0 7px;
    padding-bottom: 3px;
    display: grid;
    grid-template-rows: 202fr 100fr;
    background: #000;
    border: solid #716f64;
    border-width: 2px 3px 2px 1px;
    border-right-color: #d8d4c4;
    border-bottom-color: #f2f0e6;
}

.lower {
    display: grid;
    grid-template-columns: 779fr 446fr 443fr;
    min-height: 0;
}

.window {
    display: flex;
    flex-direction: column;
    min-width: 0;
    min-height: 0;
    padding: 0 5px 4px;
    background: linear-gradient(90deg, #0b37d8, #1464f4 3px, #0b46e0 calc(100% - 3px), #0a1fa8);
    border-radius: 7px 7px 0 0;
    box-shadow: inset 0 -2px #0a20a8;
}

.window-title {
    flex: none;
    height: 31px;
    margin: 0 -5px;
    padding: 3px 5px 0 4px;
    gap: 2px;
    border-radius: 7px 7px 0 0;
}

.window.inactive {
    padding-left: 4px;
    background: #7b8be2;
    box-shadow: inset 0 -2px #5a5fc4, inset 1px 0 #5a5fc4, inset -1px 0 #5a5fc4;
}

.inactive .window-title {
    height: 29px;
    margin-left: -4px;
    padding: 1px 5px 0 3px;
    color: #d8e4f8;
    background: linear-gradient(#7a8fe0, #9db4ee 8%, #7a96df 25%, #7b98e0 60%, #82a5e8 92%, #7288d8);
}

.inactive .window-title h2 {
    text-shadow: none;
}

.inactive .win-btn {
    border-color: #c4cff0;
    background: linear-gradient(135deg, #7490e4, #4468d6);
}

.inactive .win-btn.close {
    background: linear-gradient(135deg, #c07c92, #b05868);
}

.window-body {
    flex: 1;
    min-height: 0;
    display: flex;
    flex-direction: column;
    border: 2px solid #716f64;
    border-right-color: #f4f2e8;
    border-right-width: 1px;
    border-bottom: 0;
    background: #ece9d8;
}

/* charts */
.chart-row {
    flex: 1;
    min-height: 0;
    display: flex;
}

.chart-area {
    flex: 1;
    min-width: 0;
    display: flex;
    align-items: flex-start;
    background: #fff;
    padding-right: 7px;
}

.side-tools {
    flex: none;
    width: 24px;
    display: flex;
    flex-direction: column;
    padding-left: 1px;
}

.side-tools .grip {
    height: 9px;
    margin: 0 3px;
    background: repeating-linear-gradient(90deg, #a8a594 0 2px, transparent 2px 4px) 0 4px / 100% 2px no-repeat;
}

.side-tools button {
    display: flex;
    align-items: center;
    justify-content: center;
    height: 23px;
    background: #ece9d8;
}

.side-tools button svg {
    width: 15px;
    height: 15px;
}

.side-tools .pressed {
    background: #fff;
    border: 1px solid #8ba4c4;
    border-radius: 3px;
}

.side-tools .plain {
    background: none;
}

.chart {
    flex: 1;
    min-width: 0;
    height: 100%;
    display: flex;
    flex-direction: column;
    padding: 6px 0 5px;
}

h3 {
    font: bold 12px/16px "Liberation Sans", Arial, sans-serif;
    text-align: center;
}

.chart h3 {
    padding-left: 8px;
}

.plot {
    flex: 1;
    min-height: 0;
    width: 100%;
    font-family: "Liberation Sans", Arial, sans-serif;
}

.hscroll {
    display: flex;
    height: 17px;
    border: 1px solid #d6d3c6;
    background: linear-gradient(#f1efe8, #fefefb);
}

.chart .hscroll {
    margin: 2px 0 0 48px;
}

.hscroll button,
.vscroll button {
    width: 15px;
    height: 15px;
    border: 1px solid #9db4e0;
    border-radius: 2px;
    background: linear-gradient(135deg, #dbe5fd, #b3c8f8);
}

.hscroll svg,
.vscroll svg {
    width: 13px;
    height: 13px;
}

.hscroll button:last-child {
    margin-left: auto;
}

.thumb {
    border: 1px solid #8fabdf;
    border-radius: 2px;
    background: linear-gradient(#cbdafd, #b8ccfa);
    display: flex;
    align-items: center;
    justify-content: center;
}

.hscroll .thumb {
    width: 72px;
    margin-left: 1px;
}

.thumb::after {
    content: "";
    width: 8px;
    height: 7px;
    background: repeating-linear-gradient(90deg, #8ca8e4 0 1px, #e4ecff 1px 2px);
}

.vscroll .thumb::after {
    background: repeating-linear-gradient(#8ca8e4 0 1px, #e4ecff 1px 2px);
}

.legend {
    flex: none;
    list-style: none;
    margin: 8px 0 0 3px;
    padding: 0 2px 2px;
    border: 1px solid #333;
    background: #ffffe1;
    color: #444;
    font-size: 12px;
    line-height: 18px;
}

.legend.wide {
    width: 84px;
}

.legend.lines {
    width: 34px;
}

.legend li {
    display: flex;
    align-items: center;
    gap: 2px;
    height: 18px;
    white-space: nowrap;
}

.swatch {
    flex: none;
    display: inline-block;
    width: 12px;
    height: 13px;
    border: 1px solid #000;
}

.line-key {
    flex: none;
    width: 19px;
    height: 5px;
    display: flex;
    justify-content: center;
    background-size: 100% 2px;
    background-clip: content-box;
    padding: 2px 0 1px;
}

.line-key::after {
    content: "";
    width: 5px;
    height: 5px;
    margin-top: -2px;
    border: 1px solid;
    border-radius: 3px;
    background: #fff;
}

.empty { background-color: #b0bcdc; color: #b0bcdc; }
.green { background-color: #00ff00; color: #00ff00; }
.cyan { background-color: #00ffff; color: #00ffff; }
.yellow { background-color: #ffff00; color: #ffff00; }
.orange { background-color: #ff8000; color: #ff8000; }
.red { background-color: #ff0000; color: #ff0000; }
.gold { background-color: #ffc800; }
.blue { background-color: #0000ff; }
.magenta { background-color: #ff00ff; }
.tan { background-color: #d2b48c; }
.gray { background-color: #808080; }
.swatch.none { border-color: transparent; }

/* splitters */
.vsplit {
    flex: none;
    width: 5px;
    padding: 3px 0 0 1px;
    background: #ece9d8;
    border-right: 1px solid #716f64;
}

.vsplit svg {
    width: 4px;
    height: 18px;
    margin-left: -1px;
}

.hsplit {
    flex: none;
    height: 7px;
    padding: 2px 0 0 2px;
    border-bottom: 2px solid #716f64;
}

.lower .hsplit {
    border-bottom-width: 1px;
    height: 6px;
    margin-bottom: 2px;
}

.hsplit svg {
    width: 18px;
    height: 4px;
}

/* pie */
.pie-side {
    flex: 0 0 30%;
    display: flex;
    flex-direction: column;
    border-top: 1px solid #ece9d8;
}

.pie-panel {
    flex: 1;
    min-height: 0;
    display: flex;
    flex-direction: column;
    margin: 0 1px 0 1px;
    padding-top: 7px;
    background: #fff;
    border-right: 2px solid #d5d1bf;
    border-bottom: 2px solid #b5b29f;
}

.hint {
    text-align: center;
    font-size: 12px;
    line-height: 16px;
    color: #333;
    padding-bottom: 5px;
}

.bottom-tabs {
    display: flex;
    align-items: flex-start;
    height: 21px;
}

.btab {
    height: 19px;
    padding: 0 5px;
    border: 1px solid #91a7b4;
    border-top: 0;
    border-radius: 0 0 3px 3px;
    background: linear-gradient(#f3f2ec, #fdfdfc);
}

.btab.active {
    height: 21px;
    padding: 3px 6px 0;
    background: #fcfcfe;
    border-bottom: 3px solid #f9b233;
}

/* events */
.event-row {
    flex: none;
    display: flex;
}

.event-panel {
    flex: 1;
    min-width: 0;
    display: grid;
    grid-template-columns: 1fr 16px;
    border: 1px solid #7f9db9;
    margin-right: 2px;
}

.event-scroll {
    overflow: hidden;
    height: 174px;
}

table {
    border-collapse: separate;
    border-spacing: 0;
    table-layout: fixed;
}

th {
    position: relative;
    text-align: left;
    font-weight: normal;
    white-space: nowrap;
    background: linear-gradient(#ece9d8 75%, #cbc7b8);
}

th::after {
    content: "";
    position: absolute;
    right: 2px;
    top: 2px;
    height: 8px;
    border-right: 1px solid #c5c2b0;
}

.events {
    width: 1736px;
}

.c-sev {
    width: 61px;
}

.c-date {
    width: 175px;
}

.c-last {
    width: 150px;
}

.events th {
    height: 15px;
    padding: 1px 3px 0 2px;
    line-height: 14px;
}

.events td {
    height: 16px;
    padding: 0 1px;
    line-height: 15px;
    font-family: Roboto, "Liberation Sans", sans-serif;
    border-right: 1px solid #808080;
    border-bottom: 1px solid #808080;
    background: #f2f2f2;
    overflow: hidden;
    white-space: nowrap;
}

.events tr:nth-child(even) td {
    background: #e6e6e6;
}

.events td:first-child {
    text-align: center;
}

.sort {
    display: inline-block;
    width: 14px;
    height: 14px;
    margin-left: 2px;
    vertical-align: top;
}

.sev {
    display: block;
    width: 13px;
    height: 13px;
    margin: 0 auto;
    border: 1px solid #0a7080;
    border-radius: 50%;
    background: #18c0e0;
    font: bold 8px/11px "Liberation Sans", sans-serif;
}

.s1 { background: #18d828; border-color: #0a7a14; }
.s3 { background: #ffff20; border-color: #a0a000; }
.s5 { background: #f01c1c; border-color: #8a0808; }

.vscroll {
    margin-top: 15px;
    display: flex;
    flex-direction: column;
    background: #f7f6f0;
}

.vscroll .thumb {
    height: 14px;
    margin: 1px 1px auto 0;
}

/* status bar */
.status {
    flex: none;
    display: flex;
    align-items: stretch;
    height: 15px;
    margin-top: 1px;
    border-top: 1px solid #aca899;
    font-family: Roboto, "Liberation Sans", sans-serif;
    line-height: 14px;
}

.count {
    width: 299px;
    text-align: center;
    border-right: 1px solid #aca899;
}

.update {
    flex: 1;
    padding-left: 1px;
}

.meter {
    width: 54px;
    margin: 1px 8px 1px 0;
    background: #007a00 radial-gradient(#001a00 1px, transparent 1px) 0 0 / 3px 3px;
    box-shadow: -7px 0 #ece9d8, -8px 0 #aca899;
}

/* top values */
.top-side {
    flex: 1;
    min-width: 0;
    display: flex;
    flex-direction: column;
}

.top-panel {
    flex: 1;
    min-height: 0;
    display: flex;
    flex-direction: column;
    margin: 1px 3px 0 1px;
    padding: 1px;
    background: #fff;
    border-right: 2px solid #8d8a7a;
    border-bottom: 2px solid #8d8a7a;
}

.top-box {
    flex: 1;
    margin-top: 1px;
    border: 1px solid #7f9db9;
    background: #ece9d8;
}

.top-values {
    width: 100%;
}

.top-values th {
    height: 15px;
    padding: 0 2px;
    line-height: 15px;
}

.top-values td {
    height: 16px;
    padding: 0 2px 0 1px;
    background: #fff;
    font-size: 12px;
    line-height: 15px;
}

.top-values td:last-child {
    text-align: right;
}

.top-values .swatch {
    width: 13px;
    margin-right: 4px;
    vertical-align: top;
    margin-top: 1px;
}

/* taskbar */
.taskbar {
    flex: none;
    display: flex;
    align-items: stretch;
    height: 31px;
    color: #fff;
    font-family: "DejaVu Sans Condensed", "DejaVu Sans", sans-serif;
    background: linear-gradient(#3a81ee, #3f8cf0 6%, #245edb 18%, #245edb 85%, #1941a5);
}

.start {
    display: flex;
    align-items: center;
    gap: 5px;
    width: 97px;
    padding-left: 10px;
    border-radius: 0 10px 10px 0;
    background: linear-gradient(#5eac56, #3c8f3c 15%, #3c963c 70%, #2f7a2f);
    box-shadow: inset -3px 0 4px #2a6a2a;
    font: italic bold 16px "Open Sans", sans-serif;
    text-shadow: 1px 1px 2px #1c4a1c;
}

.start svg {
    width: 19px;
    height: 18px;
}

.quick {
    display: flex;
    align-items: center;
    gap: 7px;
    width: 102px;
    padding-left: 12px;
}

.more {
    margin: 0 0 12px 6px;
    font-size: 14px;
    line-height: 14px;
}

.task {
    display: flex;
    align-items: center;
    gap: 4px;
    width: 158px;
    margin: 3px 2px 2px 0;
    padding-left: 9px;
    border-radius: 2px;
    background: linear-gradient(#5a9af8, #3c81f0 15%, #3a7eee 85%, #2c66d8);
}

.current {
    background: #1e50b8;
    box-shadow: inset 1px 1px 2px #0c2c78;
}

.tray {
    display: flex;
    align-items: center;
    gap: 2px;
    margin-left: auto;
    padding: 0 17px 0 10px;
    border-left: 1px solid #0a4a9a;
    background: linear-gradient(#18b8f4, #12a0ee 12%, #0f90e8 85%, #0c6cc0);
}

.clock {
    margin-left: 8px;
}
```
FILE: charts.js
```js
const NS = 'http://www.w3.org/2000/svg';

function add(parent, tag, attrs, text) {
    const el = document.createElementNS(NS, tag);
    for (const key in attrs) {
        el.setAttribute(key, attrs[key]);
    }
    if (text !== undefined) {
        el.textContent = text;
    }
    parent.appendChild(el);
    return el;
}

function line(svg, x1, y1, x2, y2, color) {
    add(svg, 'line', { x1, y1, x2, y2, stroke: color || '#000', 'shape-rendering': 'crispEdges' });
}

// frame, grid and both axes; box = {left, top, right, bottom}
function drawAxes(svg, box, max, step, minor, ticks) {
    const scale = (box.bottom - box.top) / max;
    line(svg, box.left, box.top, box.right, box.top, '#c0c0c0');
    line(svg, box.right, box.top, box.right, box.bottom, '#c0c0c0');
    line(svg, box.left, box.top, box.left, box.bottom);
    line(svg, box.left, box.bottom, box.right, box.bottom);
    for (let v = 0; v <= max; v += minor) {
        const y = box.bottom - v * scale;
        line(svg, box.left - (v % step ? 1 : 4), y, box.left, y);
        if (v % step === 0) {
            add(svg, 'text', { x: box.left - 5, y: y + 3, 'text-anchor': 'end', 'font-size': 11, fill: '#333' }, v);
        }
    }
    ticks.forEach(t => {
        line(svg, t.x, box.bottom, t.x, box.bottom + 4);
        if (t.label) {
            add(svg, 'text', { x: t.x, y: box.bottom + 15, 'text-anchor': 'middle', 'font-size': 10 }, t.label);
        }
    });
    const midY = (box.top + box.bottom) / 2;
    const midX = (box.left + box.right) / 2;
    add(svg, 'text', { transform: `translate(20 ${midY}) rotate(-90)`, 'text-anchor': 'middle', 'font-size': 12, fill: '#222' }, 'Event Count');
    add(svg, 'text', { x: midX, y: box.bottom + 31, 'text-anchor': 'middle', 'font-size': 12, fill: '#222' }, 'Time');
}

function gridLines(svg, box, spacing) {
    for (let x = box.left + spacing; x < box.right - 5; x += spacing) {
        line(svg, Math.round(x) + 0.5, box.top, Math.round(x) + 0.5, box.bottom, '#c0c0c0');
    }
}

// stacked bars: height of the top of each segment, first one on top
const barColors = ['#b0bcdc', '#00ff00', '#00ffff', '#ffff00', '#ff8000', '#ff0000', '#ffc800', '#0000ff', '#ff00ff', '#d2b48c', '#808080'];
const bars = [
    [0, 165, 153, 147, 136, 128, 58, 34, 28, 8, 2],
    [0, 221, 209, 203, 183, 172, 72, 49, 43, 14, 8],
    [0, 184, 172, 166, 153, 144, 64, 39, 33, 9, 3],
    [0, 212, 200, 194, 174, 163, 69, 46, 40, 13, 8],
    [0, 194, 181, 175, 162, 153, 67, 41, 35, 10, 3],
    [0, 213, 200, 194, 173, 163, 71, 46, 39, 13, 7],
    [0, 192, 181, 175, 163, 153, 65, 42, 36, 10, 4],
    [0, 204, 191, 185, 164, 154, 68, 43, 37, 12, 6],
    [0, 206, 194, 188, 174, 163, 69, 45, 39, 12, 6],
    [0, 190, 178, 172, 153, 144, 65, 40, 33, 10, 4],
    [0, 219, 207, 202, 185, 173, 72, 49, 43, 13, 8],
    [0, 186, 174, 167, 151, 143, 64, 39, 33, 10, 3],
    [0, 223, 212, 206, 187, 175, 73, 49, 44, 14, 8],
    [0, 182, 169, 163, 149, 141, 63, 38, 32, 9, 3],
    [0, 221, 209, 203, 183, 172, 72, 49, 43, 14, 8],
    [0, 184, 172, 166, 153, 144, 64, 39, 33, 9, 3],
    [0, 222, 210, 203, 182, 171, 73, 48, 42, 14, 8],
    [55, 42, 38, 37, 33, 32, 15, 8, 7, 2, 0],
    [123, 115, 106, 101, 92, 87, 41, 23, 18, 5, 0],
    [0, 216, 204, 197, 182, 171, 72, 47, 41, 12, 6],
    [0, 180, 168, 162, 144, 136, 61, 38, 32, 10, 4],
    [0, 86, 81, 78, 73, 69, 29, 19, 16, 5, 2]
];

function drawProducts() {
    const svg = document.getElementById('product-chart');
    const box = { left: 48.5, top: 7.5, right: 1035.5, bottom: 258.5 };
    const step = 32.93;
    const ticks = [];
    for (let i = 0; i < 30; i++) {
        const minute = 28 + i / 2;
        ticks.push({ x: 64.5 + i * step, label: i % 2 ? '' : `13:${minute}:30` });
    }
    gridLines(svg, box, 164.4);
    bars.forEach((tops, i) => {
        const x = Math.round(64.5 + (i + 7) * step - 12) + 0.5;
        tops.forEach((top, k) => {
            const below = tops[k + 1] || 0;
            if (top > below) {
                const rect = { x, y: box.bottom - top, width: 23, height: top - below, stroke: '#000', 'shape-rendering': 'crispEdges' };
                // the interval still being filled is drawn darker
                if (i === bars.length - 1) {
                    add(svg, 'rect', { ...rect, fill: '#000' });
                    add(svg, 'rect', { ...rect, fill: barColors[k], 'fill-opacity': 0.5 });
                } else {
                    add(svg, 'rect', { ...rect, fill: barColors[k] });
                }
            }
        });
    });
    drawAxes(svg, box, 600, 100, 20, ticks);
}

const series = [
    { color: '#b0bcdc', points: [0, 0, 0, 0, 2, 2, 0, 0, 0, 0] },
    { color: '#00ff00', points: [0, 0, 0, 0, 5, 4, 0, 0, 1, 0] },
    { color: '#00ffff', points: [0, 86, 100, 127, 25, 63, 120, 102, 47, 0] },
    { color: '#ffff00', points: [0, 32, 49, 52, 16, 36, 52, 46, 21, 0] },
    { color: '#ff8000', points: [0, 26, 29, 38, 7, 17, 36, 29, 14, 0] },
    { color: '#ff0000', points: [0, 35, 48, 55, 11, 29, 57, 44, 23, 0] }
];

function drawSeverity() {
    const svg = document.getElementById('severity-chart');
    const box = { left: 48.5, top: 7.5, right: 690.5, bottom: 161.5 };
    const labels = ['13:38:30', '13:39:00', '13:39:30', '13:40:00', '13:40:30', '13:41:00', '13:41:30', '13:42:00', '13:42:30', '13:43:00'];
    const px = i => 80.5 + i * 64.2;
    series.forEach(s => {
        const pts = s.points.map((h, i) => `${px(i)},${box.bottom - h}`).join(' ');
        add(svg, 'polyline', { points: pts, fill: 'none', stroke: s.color, 'stroke-width': 2 });
        s.points.forEach((h, i) => {
            add(svg, 'circle', { cx: px(i), cy: box.bottom - h, r: 2, fill: '#fff', stroke: s.color });
        });
    });
    gridLines(svg, box, 107);
    drawAxes(svg, box, 300, 50, 10, labels.map((label, i) => ({ x: px(i), label })));
}

// pie: rim points run clockwise from the right edge
const rim = [[322, 117], [322, 126], [313, 143], [306, 150], [255, 168], [227, 167], [213, 164], [170, 131], [168, 122], [173, 105]];
const slices = ['#00c0c0', '#00c000', '#606060', '#bc9400', '#bc5c00', '#9c8468', '#b800b8', '#0000b8', '#b8b800', '#b80000'];
const sides = ['#008080', '#008a00', '#404040', '#8c7000', '#b85a00', '#b09474', '#ff00ff', '#0000ff', '#ffff00'];

// [text, line x, from y, to y, end x]
const callouts = [
    ['95', 254, 73, 57, 274], ['12', 168, 115, 98, 148], ['6', 171, 147, 179, 157],
    ['28', 187, 171, 202, 166], ['6', 221, 187, 218, 207], ['11', 242, 189, 221, 221],
    ['24', 283, 182, 214, 304], ['5', 309, 168, 216, 323], ['12', 317, 155, 200, 338],
    ['6', 321, 137, 184, 335], ['1', 320, 132, 168, 334]
];

function drawPie() {
    const svg = document.getElementById('pie-chart');
    const depth = 20;
    sides.forEach((color, i) => {
        const [x1, y1] = rim[i];
        const [x2, y2] = rim[i + 1];
        add(svg, 'path', {
            d: `M${x1} ${y1}A77.5 48 0 0 1 ${x2} ${y2}V${y2 + depth}A77.5 48 0 0 0 ${x1} ${y1 + depth}Z`,
            fill: color, stroke: '#444', 'stroke-width': 0.5
        });
    });
    slices.forEach((color, i) => {
        const [x1, y1] = rim[i];
        const [x2, y2] = rim[(i + 1) % rim.length];
        add(svg, 'path', { d: `M246 117L${x1} ${y1}A77.5 48 0 0 1 ${x2} ${y2}Z`, fill: color, stroke: '#444' });
    });
    callouts.forEach(([text, x, y1, y2, end]) => {
        line(svg, x + 0.5, y1, x + 0.5, y2 + 0.5);
        line(svg, x + 0.5, y2 + 0.5, end + 0.5, y2 + 0.5);
        add(svg, 'text', { x: Math.min(x, end) + 3, y: y2 - 1, 'font-size': 12, fill: '#333' }, text);
    });
}

drawProducts();
drawSeverity();
drawPie();
```
